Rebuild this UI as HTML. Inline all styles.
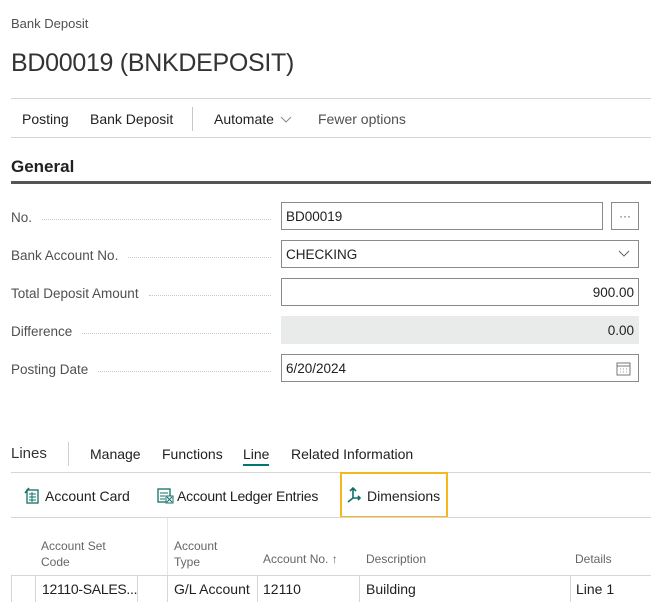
<!DOCTYPE html>
<html><head><meta charset="utf-8"><style>
*{margin:0;padding:0;box-sizing:border-box}
body{width:651px;height:602px;overflow:hidden;background:#fff;font-family:"Segoe UI","Liberation Sans",sans-serif;color:#212121;position:relative}
.a{position:absolute;white-space:nowrap}
.hl{position:absolute;height:1px;background:#d6d6d6}
.lbl{position:absolute;left:11px;width:262px;font-size:13.5px;color:#505050;display:flex;align-items:center}
.lbl span.d{flex:1;margin-left:10px;border-bottom:1px dotted #c8c8c8;height:1px;margin-top:4px;margin-right:2px}
.inp{position:absolute;left:281px;width:358px;height:28px;border:1px solid #8a8a8a;font-size:13.5px;padding:0 4px;line-height:27px;color:#212121}
</style></head><body>
<div class="a" style="left:11px;top:16px;font-size:13px;color:#505050">Bank Deposit</div>
<div class="a" style="left:11px;top:49px;font-size:25px;color:#333;letter-spacing:-0.3px">BD00019 (BNKDEPOSIT)</div>
<div class="hl" style="left:11px;top:98px;width:640px"></div>
<div class="a" style="left:22px;top:111px;font-size:14px">Posting</div>
<div class="a" style="left:90px;top:111px;font-size:14px">Bank Deposit</div>
<div class="a" style="left:192px;top:107px;width:1px;height:24px;background:#c8c8c8"></div>
<div class="a" style="left:214px;top:111px;font-size:14px">Automate <svg width="12" height="8" style="margin-left:2px"><path d="M1 1L6 6L11 1" fill="none" stroke="#888" stroke-width="1"/></svg></div>
<div class="a" style="left:318px;top:111px;font-size:14px;color:#505050">Fewer options</div>
<div class="hl" style="left:11px;top:137px;width:640px"></div>
<div class="a" style="left:11px;top:157px;font-size:17px;font-weight:600;color:#212121">General</div>
<div class="a" style="left:11px;top:181px;width:640px;height:3px;background:#555"></div>

<div class="lbl" style="top:207px;height:20px">No.<span class="d"></span></div>
<div class="inp" style="top:202px;width:322px">BD00019</div>
<div class="inp" style="top:202px;left:611px;width:28px;text-align:center;padding:0;color:#555;font-size:12px">&middot;&middot;&middot;</div>
<div class="lbl" style="top:245px;height:20px">Bank Account No.<span class="d"></span></div>
<div class="inp" style="top:240px">CHECKING<svg style="position:absolute;right:8px;top:9px" width="12" height="8"><path d="M1 1L6 6L11 1" fill="none" stroke="#666" stroke-width="1"/></svg></div>
<div class="lbl" style="top:283px;height:20px">Total Deposit Amount<span class="d"></span></div>
<div class="inp" style="top:278px;text-align:right">900.00</div>
<div class="lbl" style="top:321px;height:20px">Difference<span class="d"></span></div>
<div class="inp" style="top:316px;text-align:right;background:#e8ebea;border-color:#e8ebea">0.00</div>
<div class="lbl" style="top:359px;height:20px">Posting Date<span class="d"></span></div>
<div class="inp" style="top:354px">6/20/2024<svg style="position:absolute;right:7px;top:6px" width="15" height="15"><rect x="1" y="2" width="13" height="12" fill="none" stroke="#777"/><line x1="1" y1="5" x2="14" y2="5" stroke="#777"/><path d="M4 8h1M7 8h1M10 8h1M4 11h1M7 11h1M10 11h1" stroke="#999"/></svg></div>

<div class="a" style="left:11px;top:445px;font-size:15px;color:#333">Lines</div>
<div class="a" style="left:68px;top:442px;width:1px;height:24px;background:#d0d0d0"></div>
<div class="a" style="left:90px;top:446px;font-size:14px">Manage</div>
<div class="a" style="left:162px;top:446px;font-size:14px">Functions</div>
<div class="a" style="left:243px;top:446px;font-size:14px">Line</div>
<div class="a" style="left:243px;top:464px;width:26px;height:2px;background:#00776f"></div>
<div class="a" style="left:291px;top:446px;font-size:14px">Related Information</div>
<div class="hl" style="left:11px;top:472px;width:640px"></div>
<svg class="a" style="left:24px;top:487px" width="16" height="17"><rect x="3" y="3" width="11" height="13" fill="none" stroke="#106f6a" stroke-width="1.3"/><path d="M5 7h7M5 10h7M5 13h7M8 5v10" stroke="#106f6a"/><path d="M1 6L5 1" stroke="#106f6a" stroke-width="1.5"/></svg>
<div class="a" style="left:45px;top:488px;font-size:14px">Account Card</div>
<svg class="a" style="left:157px;top:487px" width="17" height="17"><rect x="1" y="2" width="12" height="13" fill="none" stroke="#106f6a" stroke-width="1.3"/><path d="M3 6h8M3 9h5M3 12h5" stroke="#106f6a"/><rect x="9" y="9" width="7" height="7" fill="#fff" stroke="#106f6a"/><path d="M10 10l5 5M15 10l-5 5" stroke="#106f6a"/></svg>
<div class="a" style="left:177px;top:488px;font-size:14px;letter-spacing:-0.2px">Account Ledger Entries</div>
<div class="a" style="left:340px;top:472px;width:108px;height:46px;border:2px solid #f5b71c"></div>
<svg class="a" style="left:346px;top:487px" width="16" height="16"><path d="M7 2v9l-5 4M7 11h7M4 4l3-3 3 3M12 9l2 2-2 2" fill="none" stroke="#106f6a" stroke-width="1.6"/></svg>
<div class="a" style="left:367px;top:488px;font-size:14px">Dimensions</div>
<div class="hl" style="left:11px;top:517px;width:640px"></div>

<div class="a" style="left:167px;top:518px;width:1px;height:57px;background:#e6e6e6"></div>
<div class="a" style="left:41px;top:538px;font-size:12px;color:#666;line-height:16px">Account Set<br>Code</div>
<div class="a" style="left:174px;top:538px;font-size:12px;color:#666;line-height:16px">Account<br>Type</div>
<div class="a" style="left:263px;top:552px;font-size:12px;color:#666">Account No. &#x2191;</div>
<div class="a" style="left:366px;top:552px;font-size:12px;color:#666">Description</div>
<div class="a" style="left:575px;top:552px;font-size:12px;color:#666">Details</div>
<div class="hl" style="left:11px;top:575px;width:640px"></div>
<div class="a" style="left:11px;top:575px;width:1px;height:27px;background:#d6d6d6"></div>
<div class="a" style="left:35px;top:575px;width:1px;height:27px;background:#d6d6d6"></div>
<div class="a" style="left:137px;top:575px;width:1px;height:27px;background:#d6d6d6"></div>
<div class="a" style="left:167px;top:575px;width:1px;height:27px;background:#d6d6d6"></div>
<div class="a" style="left:257px;top:575px;width:1px;height:27px;background:#d6d6d6"></div>
<div class="a" style="left:359px;top:575px;width:1px;height:27px;background:#d6d6d6"></div>
<div class="a" style="left:570px;top:575px;width:1px;height:27px;background:#d6d6d6"></div>
<div class="a" style="left:42px;top:581px;font-size:14px;letter-spacing:-0.3px">12110-SALES...</div>
<div class="a" style="left:174px;top:581px;font-size:14px">G/L Account</div>
<div class="a" style="left:263px;top:581px;font-size:14px">12110</div>
<div class="a" style="left:366px;top:581px;font-size:14px">Building</div>
<div class="a" style="left:576px;top:581px;font-size:14px">Line 1</div>
</body></html>
